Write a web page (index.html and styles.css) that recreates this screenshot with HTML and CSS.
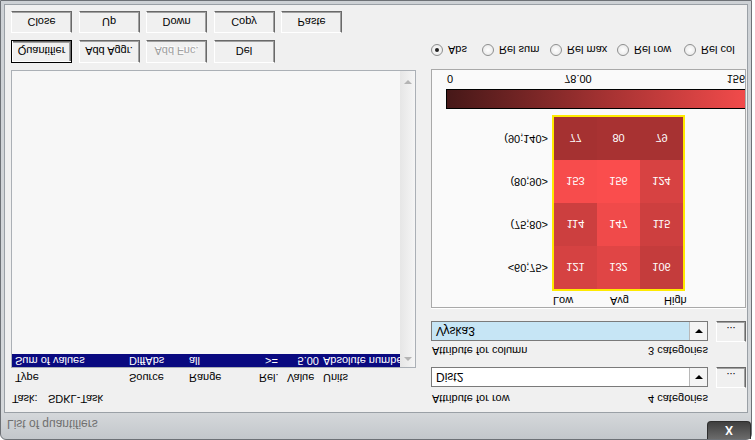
FILE: index.html
```html
<!DOCTYPE html>
<html lang="en">
<head>
    <meta charset="UTF-8">
    <title>List of quantifiers</title>
    <link rel="stylesheet" href="styles.css">
</head>
<body>
    <div class="window">
        <!-- title bar -->
        <div class="titlebar">
            <span class="title">List of quantifiers</span>
            <span class="close-btn">X</span>
        </div>

        <div class="client">
            <!-- left: quantifier list -->
            <div class="left">
                <div class="task"><span class="task-key">Task:</span><span>SDKL-Task</span></div>
                <div class="cols listhead">
                    <span>Type</span><span>Source</span><span>Range</span><span>Rel.</span><span>Value</span><span>Units</span>
                </div>
                <div class="listbox">
                    <div class="rows">
                        <div class="cols row selected">
                            <span>Sum of values</span><span>DiffAbs</span><span>all</span><span class="rel">&gt;=</span><span class="num">5.00</span><span>Absolute numbers</span>
                        </div>
                    </div>
                    <div class="scrollbar">
                        <span class="arrow-up"></span>
                        <span class="arrow-down"></span>
                    </div>
                </div>
                <div class="btnrow tall">
                    <button class="btn default">Quantifier</button>
                    <button class="btn">Add Aggr.</button>
                    <button class="btn disabled">Add Fnc.</button>
                    <button class="btn">Del</button>
                </div>
                <div class="btnrow">
                    <button class="btn">Close</button>
                    <button class="btn">Up</button>
                    <button class="btn">Down</button>
                    <button class="btn">Copy</button>
                    <button class="btn">Paste</button>
                </div>
            </div>

            <!-- right: attributes and table -->
            <div class="right">
                <div class="attr-label"><span>Attribute for row</span><span>4 categories</span></div>
                <div class="combo-row">
                    <div class="combo">
                        <span class="combo-text">Dist2</span>
                        <span class="dropbtn"><span class="arrow-down dark"></span></span>
                    </div>
                    <button class="dots">...</button>
                </div>
                <div class="attr-label second"><span>Attribute for column</span><span>3 categories</span></div>
                <div class="combo-row near">
                    <div class="combo">
                        <span class="combo-text sel">Vyska3</span>
                        <span class="dropbtn"><span class="arrow-down dark"></span></span>
                    </div>
                    <button class="dots">...</button>
                </div>

                <div class="chart">
                    <div class="col-labels">
                        <span class="c-low">Low</span><span class="c-avg">Avg</span><span>High</span>
                    </div>
                    <div class="table">
                        <div class="row-labels">
                            <span>&lt;60;75&gt;</span>
                            <span>(75;80&gt;</span>
                            <span>(80;90&gt;</span>
                            <span>(90;140&gt;</span>
                        </div>
                        <div class="grid">
                            <span style="background: rgb(213, 66, 66)">121</span>
                            <span style="background: rgb(224, 69, 69)">132</span>
                            <span style="background: rgb(196, 60, 60)">106</span>
                            <span style="background: rgb(204, 63, 63)">114</span>
                            <span style="background: rgb(240, 74, 74)">147</span>
                            <span style="background: rgb(205, 63, 63)">115</span>
                            <span style="background: rgb(247, 76, 76)">153</span>
                            <span style="background: rgb(250, 77, 77)">156</span>
                            <span style="background: rgb(215, 66, 66)">124</span>
                            <span style="background: rgb(165, 49, 49)">77</span>
                            <span style="background: rgb(168, 50, 50)">80</span>
                            <span style="background: rgb(167, 50, 50)">79</span>
                        </div>
                    </div>
                    <div class="scale"></div>
                    <div class="scale-nums">
                        <span class="n-min">0</span><span class="n-mid">78.00</span><span>156</span>
                    </div>
                </div>

                <div class="radios">
                    <label class="radio"><span class="dot on"></span>Abs</label>
                    <label class="radio"><span class="dot"></span>Rel sum</label>
                    <label class="radio"><span class="dot"></span>Rel max</label>
                    <label class="radio"><span class="dot"></span>Rel row</label>
                    <label class="radio"><span class="dot"></span>Rel col</label>
                </div>
            </div>
        </div>
    </div>
</body>
</html>
```

FILE: styles.css
```css
/* page */
html, body {
    margin: 0;
    padding: 0;
    overflow: hidden;
    background: #fff;
    font-family: "Liberation Sans", Arial, sans-serif;
    font-size: 11px;
    color: #000;
}

/* the whole dialog is shown upside down */
.window {
    width: 752px;
    height: 440px;
    box-sizing: border-box;
    border: 1px solid #6d7176;
    border-radius: 6px 6px 0 0;
    background: linear-gradient(#c3c7cb, #d5d8db 27px, #cdd1d5);
    display: flex;
    flex-direction: column;
    transform: scaleY(-1);
}

.titlebar {
    height: 26px;
    display: flex;
    justify-content: space-between;
    align-items: flex-start;
    flex-shrink: 0;
}

.title {
    font-size: 12px;
    color: #707070;
    padding: 8px 0 0 6px;
}

.close-btn {
    width: 44px;
    height: 18px;
    box-sizing: border-box;
    border: 1px solid #2e2e2e;
    border-top: none;
    border-radius: 0 0 4px 4px;
    background: linear-gradient(#6b6b6b, #3f3f3f);
    color: #fff;
    font-weight: bold;
    font-size: 12px;
    display: flex;
    align-items: center;
    justify-content: center;
}

.client {
    flex: 1;
    margin: 0 3px 3px;
    border: 1px solid #9aa0a6;
    background: #f0f0f0;
    display: flex;
    gap: 15px;
    padding: 6px 1px 0 6px;
}

/* left column */
.left {
    width: 405px;
    display: flex;
    flex-direction: column;
}

.task {
    height: 14px;
    line-height: 14px;
    padding-left: 1px;
    display: flex;
}

.task-key {
    width: 36px;
}

.cols {
    display: grid;
    grid-template-columns: 114px 60px 70px 28px 36px 1fr;
    white-space: nowrap;
}

.listhead {
    margin-top: 7px;
    height: 14px;
    line-height: 14px;
    padding-left: 4px;
}

.listbox {
    margin-top: 3px;
    height: 298px;
    box-sizing: border-box;
    border: 1px solid #abb0b6;
    background: #f7f7f7;
    display: flex;
}

.rows {
    flex: 1;
    overflow: hidden;
}

.row {
    height: 13px;
    line-height: 13px;
    padding-left: 3px;
    overflow: hidden;
}

.row.selected {
    background: #0a0a80;
    color: #fff;
}

.row .rel {
    padding-left: 6px;
}

.row .num {
    text-align: right;
    padding-right: 4px;
}

.scrollbar {
    width: 15px;
    background: linear-gradient(to right, #e6e6e6, #f5f5f5);
    display: flex;
    flex-direction: column;
    justify-content: space-between;
    align-items: center;
    padding: 6px 0 9px;
    box-sizing: border-box;
}

.arrow-up {
    width: 0;
    height: 0;
    border-left: 4px solid transparent;
    border-right: 4px solid transparent;
    border-bottom: 4px solid #b4b4b4;
}

.arrow-down {
    width: 0;
    height: 0;
    border-left: 4px solid transparent;
    border-right: 4px solid transparent;
    border-top: 4px solid #b4b4b4;
}

.arrow-down.dark {
    border-top-color: #000;
}

/* buttons */
.btnrow {
    display: flex;
    gap: 6.5px;
    margin-top: 7px;
    height: 22px;
}

.btnrow.tall {
    height: 23px;
}

.btn, .dots {
    box-sizing: border-box;
    width: 61px;
    height: 100%;
    padding: 0;
    background: #f0f0f0;
    border: 1px solid;
    border-color: #fff #696969 #696969 #fff;
    box-shadow: inset -1px -1px 0 #a0a0a0;
    font-family: inherit;
    font-size: 11px;
    color: #000;
}

.btn.default {
    border: 1px solid #000;
    box-shadow: inset 1px 1px 0 #fff, inset -1px -1px 0 #696969, inset -2px -2px 0 #a0a0a0;
}

.btn.disabled {
    color: #a0a0a0;
    text-shadow: 1px 1px 0 #fff;
}

/* right column */
.right {
    width: 315px;
    display: flex;
    flex-direction: column;
}

.attr-label {
    width: 276px;
    height: 14px;
    line-height: 14px;
    padding-left: 1px;
    display: flex;
    justify-content: space-between;
}

.attr-label.second {
    margin-top: 9px;
}

.combo-row {
    margin-top: 4px;
    height: 21px;
    display: flex;
    gap: 8px;
    align-items: center;
}

.combo-row.near {
    margin-top: 2px;
}

.combo {
    width: 277px;
    height: 20px;
    box-sizing: border-box;
    border: 1px solid #7a7a7a;
    background: #fff;
    display: flex;
}

.combo-text {
    flex: 1;
    padding-left: 4px;
    line-height: 18px;
    font-size: 12px;
}

.combo-text.sel {
    background: #c6e5f5;
}

.dropbtn {
    width: 17px;
    border-left: 1px solid #b8b8b8;
    background: #f4f4f4;
    display: flex;
    align-items: center;
    justify-content: center;
}

.dots {
    width: 30px;
    height: 21px;
    line-height: 10px;
}

/* contingency table */
.chart {
    margin-top: 13px;
    height: 239px;
    box-sizing: border-box;
    border: 1px solid #a9a9a9;
    box-shadow: 0 -1px 0 #fff;
    background: #fafafa;
    overflow: hidden;
}

.col-labels {
    height: 13px;
    line-height: 13px;
    padding-left: 121px;
    display: flex;
    white-space: nowrap;
}

.c-low {
    width: 57px;
}

.c-avg {
    width: 54px;
}

.table {
    margin-top: 3px;
    display: flex;
    gap: 4px;
}

.row-labels {
    width: 116px;
    padding-top: 2px;
    display: flex;
    flex-direction: column;
    text-align: right;
}

.row-labels span {
    height: 43px;
    line-height: 43px;
}

.grid {
    border: 2px solid #ffea00;
    display: grid;
    grid-template-columns: repeat(3, 43px);
    grid-auto-rows: 43px;
}

.grid span {
    color: #fff;
    display: flex;
    align-items: center;
    justify-content: center;
}

.scale {
    margin: 6px 0 0 14px;
    width: 320px;
    height: 20px;
    box-sizing: border-box;
    border: 1px solid #000;
    background: linear-gradient(to right, #461818, #a53232 50%, #fc4e4e);
    flex-shrink: 0;
}

.scale-nums {
    margin-top: 4px;
    padding-left: 15px;
    height: 13px;
    line-height: 13px;
    display: flex;
    white-space: nowrap;
}

.n-min {
    width: 119px;
}

.n-mid {
    width: 165px;
}

/* radio buttons */
.radios {
    margin-top: 12px;
    height: 14px;
    display: grid;
    grid-template-columns: 51px 68px 67px 67px 1fr;
}

.radio {
    display: flex;
    align-items: center;
    gap: 5px;
    white-space: nowrap;
}

.dot {
    width: 12px;
    height: 12px;
    box-sizing: border-box;
    border-radius: 50%;
    border: 1px solid #8e8f8f;
    background: radial-gradient(#fff, #e4e4e4);
    display: flex;
    align-items: center;
    justify-content: center;
}

.dot.on::after {
    content: "";
    width: 4px;
    height: 4px;
    border-radius: 50%;
    background: #222;
}
```
